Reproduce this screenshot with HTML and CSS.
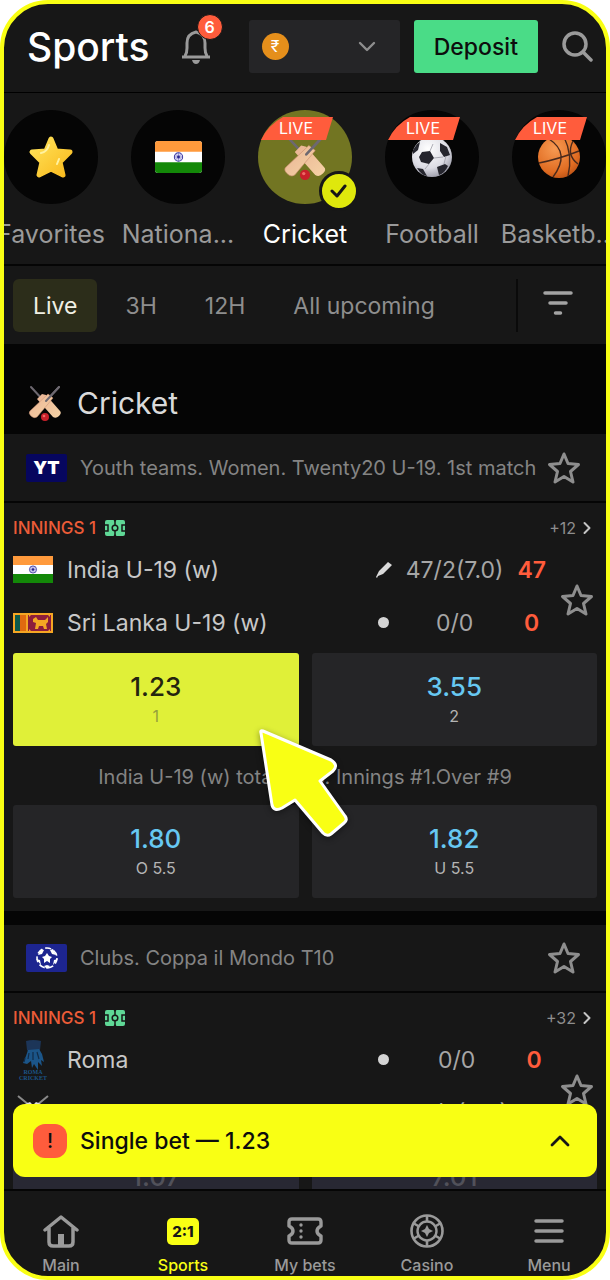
FILE: index.html
```html
<!DOCTYPE html>
<html lang="en">
<head>
  <meta charset="UTF-8" />
  <meta name="viewport" content="width=device-width, initial-scale=1.0"/>
  <title>Sports</title>
  <link rel="stylesheet" href="styles.css">
</head>
<body>
  <!-- Shared icons -->
  <svg class="sprite" aria-hidden="true">
    <defs>
      <linearGradient id="wood" x1="0" y1="0" x2="1" y2="1">
        <stop offset="0" stop-color="#e9b394"/>
        <stop offset="1" stop-color="#f6d3a6"/>
      </linearGradient>
      <linearGradient id="gold" x1="0" y1="0" x2="1" y2="1">
        <stop offset="0" stop-color="#ffe45c"/>
        <stop offset="1" stop-color="#f9b91c"/>
      </linearGradient>
      <radialGradient id="leather" cx=".4" cy=".3" r=".8">
        <stop offset="0" stop-color="#ffffff"/>
        <stop offset=".6" stop-color="#dcdce4"/>
        <stop offset="1" stop-color="#8c8c9a"/>
      </radialGradient>
      <radialGradient id="orange" cx=".4" cy=".3" r=".8">
        <stop offset="0" stop-color="#f79a52"/>
        <stop offset=".7" stop-color="#e06c22"/>
        <stop offset="1" stop-color="#b44c12"/>
      </radialGradient>
    </defs>
    <symbol id="star" viewBox="0 0 34 34">
      <path d="M17 3l4 9.500 10.500 1-8 7 2.500 10.500-9-5.500-9 5.500 2.500-10.500-8-7 10.500-1z" fill="none" stroke="#8e8e8e" stroke-width="3" stroke-linejoin="round"/>
    </symbol>
    <symbol id="bats" viewBox="0 0 34 36">
      <path d="M3 2l13 14M31 2L18 16" stroke="#6d6870" stroke-width="2" stroke-linecap="round"/>
      <path d="M14 9l-5 5 16 18q3 2 6-1t1-5L18 10z" fill="url(#wood)"/>
      <path d="M20 9l5 4L9 32q-3 2-6-1t-1-5z" fill="url(#wood)" stroke="#c98f70" stroke-width=".5"/>
      <path d="M31 2L18 16" stroke="#6d6870" stroke-width="2" stroke-linecap="round"/>
      <circle cx="17" cy="32" r="4" fill="#c8202a"/>
      <circle cx="16" cy="31" r="1.300" fill="#ee6a66"/>
    </symbol>
    <symbol id="india" viewBox="0 0 60 40" preserveAspectRatio="none">
      <path fill="#fff" d="M0 0h60v40H0z"/>
      <path fill="#ff9a3c" d="M0 0h60v13.500H0z"/>
      <path fill="#138808" d="M0 26.500h60V40H0z"/>
      <circle cx="30" cy="20" r="5.300" fill="#dcdcf5" stroke="#3a36a0" stroke-width="1.300"/>
      <path d="M30 15v10M25 20h10M26.500 16.500l7 7M33.500 16.500l-7 7" stroke="#6662b8" stroke-width=".7"/>
      <circle cx="30" cy="20" r="1.800" fill="#2a2690"/>
    </symbol>
    <symbol id="pitch" viewBox="0 0 20 16">
      <path fill="#5fd896" d="M2 0h6.500L10 2l1.500-2H18q2 0 2 2v12q0 2-2 2h-6.500L10 14l-1.500 2H2q-2 0-2-2V2q0-2 2-2z"/>
      <path fill="none" stroke="#171717" stroke-width="1.500" d="M10 0v5M10 11v5M0 5h3v6H0M20 5h-3v6h3"/>
      <circle cx="10" cy="8" r="2.800" fill="none" stroke="#171717" stroke-width="1.500"/>
    </symbol>
    <symbol id="next" viewBox="0 0 8 14">
      <path d="M1.500 2l5 5-5 5" fill="none" stroke="#c4c4c4" stroke-width="2" stroke-linecap="round" stroke-linejoin="round"/>
    </symbol>
  </svg>

  <div class="phone">
    <header class="topbar">
      <h1>Sports</h1>
      <button class="bell" aria-label="Notifications">
        <svg width="30" height="36" viewBox="0 0 30 36" fill="none" stroke="#9a9a9a" stroke-width="3">
          <path d="M1 28h28M4 27q2-3 2-8v-5q0-9 9-11 9 2 9 11v5q0 5 2 8" stroke-linejoin="round"/>
          <path d="M11 31h8q-1 4-4 4t-4-4z" fill="#9a9a9a" stroke="none"/>
        </svg>
        <span class="count">6</span>
      </button>
      <div class="wallet">
        <span class="coin">₹</span>
        <select aria-label="Wallet"><option></option></select>
        <svg class="arrow" width="18" height="12" viewBox="0 0 18 12"><path d="M2 2l7 7 7-7" fill="none" stroke="#8e8e8e" stroke-width="2.400" stroke-linecap="round" stroke-linejoin="round"/></svg>
      </div>
      <button class="deposit">Deposit</button>
      <button class="search" aria-label="Search">
        <svg width="31" height="32" viewBox="0 0 31 32" fill="none" stroke="#9a9a9a" stroke-width="3.500" stroke-linecap="round"><circle cx="13" cy="13" r="11"/><path d="M21 21l8 8"/></svg>
      </button>
    </header>

    <nav class="sports">
      <a class="sport" href="#favorites">
        <span class="circle">
          <svg width="48" height="48" viewBox="0 0 48 48"><path d="M24 6l5 12 14 1-10 10 3 13-12-6-12 6 3-13L5 19l14-1z" fill="url(#gold)" stroke="url(#gold)" stroke-width="5" stroke-linejoin="round"/><path d="M22 12q-2 7-8 8M32 26l-2 5" fill="none" stroke="#fff2a0" stroke-width="2" stroke-linecap="round"/></svg>
        </span>
        <span class="label">Favorites</span>
      </a>
      <a class="sport" href="#national">
        <span class="circle"><svg class="flag" width="47" height="32"><use href="#india"/></svg></span>
        <span class="label">Nationa...</span>
      </a>
      <a class="sport active" href="#cricket">
        <span class="circle">
          <svg width="44" height="46"><use href="#bats"/></svg>
          <span class="live">LIVE</span>
          <span class="tick"><svg width="18" height="16" viewBox="0 0 18 16"><path d="M2 8l5 5 8-10" fill="none" stroke="#171717" stroke-width="3" stroke-linecap="round" stroke-linejoin="round"/></svg></span>
        </span>
        <span class="label">Cricket</span>
      </a>
      <a class="sport" href="#football">
        <span class="circle">
          <svg width="42" height="42" viewBox="0 0 42 42">
            <circle cx="21" cy="21" r="20" fill="url(#leather)"/>
            <path fill="#25252d" d="M11 16l8-1 4 7-5 6-8-2-2-5zM29 7l7 4 3 8-6 2-4-6zM26 31l8-3 3 2q-3 7-9 9zM6 32l6 1 4 7q-6-1-10-8zM2 14l4-6 3-2-2 8-5 4z"/>
            <path d="M19 15l3-7M23 22l9-1M18 28l-4 5M33 28l2-8" stroke="#9a9aa4" stroke-width=".8"/>
          </svg>
          <span class="live">LIVE</span>
        </span>
        <span class="label">Football</span>
      </a>
      <a class="sport" href="#basketball">
        <span class="circle">
          <svg width="44" height="44" viewBox="0 0 44 44">
            <circle cx="22" cy="22" r="21" fill="url(#orange)"/>
            <path d="M2 28q20-4 40-12M12 4q22 14 4 38M27 2q9 18 4 39M36 6q-7 14 5 23" fill="none" stroke="#4a2a1c" stroke-width="1.400"/>
          </svg>
          <span class="live">LIVE</span>
        </span>
        <span class="label">Basketb...</span>
      </a>
    </nav>

    <div class="filters">
      <button class="chip selected">Live</button>
      <button class="chip">3H</button>
      <button class="chip">12H</button>
      <button class="chip">All upcoming</button>
      <button class="filter-btn" aria-label="Filters">
        <svg width="30" height="24" viewBox="0 0 30 24" stroke="#a3a3a3" stroke-width="3.500" stroke-linecap="round"><path d="M2 2h26M7 12h16M12.500 22h5"/></svg>
      </button>
    </div>

    <main>
      <div class="events">
        <h2><svg width="34" height="36"><use href="#bats"/></svg>Cricket</h2>

        <section class="league">
          <span class="badge youth">YT</span>
          <h3>Youth teams. Women. Twenty20 U-19. 1st match</h3>
          <button class="fav" aria-label="Favorite league"><svg width="34" height="34"><use href="#star"/></svg></button>
        </section>
        <article class="match">
          <div class="info">
            <span class="stage">INNINGS 1</span>
            <svg width="20" height="16"><use href="#pitch"/></svg>
            <a class="more" href="#more">+12 <svg width="8" height="14"><use href="#next"/></svg></a>
          </div>
          <div class="teams">
            <svg class="logo" width="40" height="27"><use href="#india"/></svg>
            <span class="name">India U-19 (w)</span>
            <svg class="mark" width="16" height="16" viewBox="0 0 16 16"><path d="M0 15l3-6 9-9 4 3-9 9-5 2-1 2z" fill="#dadada"/></svg>
            <span class="score">47/2(7.0)</span>
            <b class="total">47</b>
            <svg class="logo" width="40" height="20" viewBox="0 0 40 20">
              <path fill="#f5a623" d="M0 0h40v20H0z"/>
              <path fill="#0b5a4c" d="M2 2h5v16H2z"/>
              <path fill="#e06a10" d="M7 2h6v16H7z"/>
              <path fill="#8d1d3c" d="M15 2h23v16H15z"/>
              <path fill="#f5a623" d="M20 6l3-2 2 3h7l3-3v5l-2 2 1 5h-3l-1-3h-4l-1 3h-3l1-6-3-1zM16 2h2l-2 2zM37 2v2l-2-2zM16 18v-2l2 2zM37 18h-2l2-2z"/>
            </svg>
            <span class="name">Sri Lanka U-19 (w)</span>
            <span class="mark dot"></span>
            <span class="score">0/0</span>
            <b class="total">0</b>
            <button class="fav" aria-label="Favorite match"><svg width="34" height="34"><use href="#star"/></svg></button>
          </div>
          <div class="odds">
            <div class="picked">
              <button class="odd on"><b>1.23</b><small>1</small></button>
              <svg class="pointer" width="100" height="120" viewBox="0 0 100 120"><path d="M9 9l68 29q8 5 2 11l-13 10 25 35q3 4-1 7l-13 11q-4 3-8-1L41 78l-13 8q-8 4-10-3L7 11q-1-3 2-2z" fill="#f9ff14" stroke="#fff" stroke-width="3" stroke-linejoin="round"/></svg>
            </div>
            <button class="odd"><b>3.55</b><small>2</small></button>
          </div>
          <p class="market">India U-19 (w) total runs. Innings #1.Over #9</p>
          <div class="odds">
            <button class="odd"><b>1.80</b><small>O 5.5</small></button>
            <button class="odd"><b>1.82</b><small>U 5.5</small></button>
          </div>
        </article>

        <section class="league second">
          <span class="badge clubs">
            <svg width="24" height="24" viewBox="0 0 24 24">
              <circle cx="12" cy="12" r="10" fill="none" stroke="#fff" stroke-width="1.600" stroke-dasharray="6 3"/>
              <path fill="#fff" d="M12 7l2 3 3 1-2 2v4l-3-2-3 2V13l-2-2 3-1zM6 3l3 1-2 4-4 1zM18 3l-3 1 2 4 4 1zM1 13l4 1 1 5zM23 13l-4 1-1 5zM9 20l3-1 3 1-3 3z"/>
            </svg>
          </span>
          <h3>Clubs. Coppa il Mondo T10</h3>
          <button class="fav" aria-label="Favorite league"><svg width="34" height="34"><use href="#star"/></svg></button>
        </section>
        <article class="match">
          <div class="info">
            <span class="stage">INNINGS 1</span>
            <svg width="20" height="16"><use href="#pitch"/></svg>
            <a class="more" href="#more">+32 <svg width="8" height="14"><use href="#next"/></svg></a>
          </div>
          <div class="teams">
            <svg class="logo" width="40" height="42" viewBox="0 0 40 42">
              <path fill="#1c3558" d="M13 2q7-2 15 0l-1 9-5 3h-5l-3-3z"/>
              <path fill="#1b5588" d="M15 11l11-1 3 5 2 8-3-2 1 6-4-4v8l-4-6-2 4-1-7-4 3-4-1 3-7z"/>
              <path d="M16 14l-1 6M20 13v8M24 13l2 7M12 19l-1 4" stroke="#122c48" stroke-width="1.200"/>
              <text x="20" y="35" class="crest">ROMA</text>
              <text x="20" y="41" class="crest">CRICKET</text>
            </svg>
            <span class="name">Roma</span>
            <span class="mark dot"></span>
            <span class="score">0/0</span>
            <b class="total">0</b>
            <svg class="logo" width="40" height="36" viewBox="0 0 40 36"><path d="M5 1l11 9 18 18M35 1L24 10 6 28" fill="none" stroke="#8a8a8a" stroke-width="2"/><path d="M12 9l5-2 3 3 3-3 5 2-8 8z" fill="#dedede"/></svg>
            <span class="name"></span>
            <span class="mark"></span>
            <span class="score">40/2(4.3)</span>
            <b class="total"></b>
            <button class="fav" aria-label="Favorite match"><svg width="34" height="34"><use href="#star"/></svg></button>
          </div>
          <div class="odds faded">
            <button class="odd"><b>1.07</b><small>1</small></button>
            <button class="odd"><b>7.01</b><small>2</small></button>
          </div>
        </article>
      </div>

      <button class="betslip">
        <span class="alert">!</span>
        Single bet — 1.23
        <svg class="up" width="20" height="13" viewBox="0 0 20 13"><path d="M2 11l8-8 8 8" fill="none" stroke="#171717" stroke-width="2.800" stroke-linecap="round" stroke-linejoin="round"/></svg>
      </button>
    </main>

    <nav class="tabs">
      <a href="#main">
        <svg width="36" height="34" viewBox="0 0 36 34" fill="none" stroke="#9a9a9a" stroke-width="3.500" stroke-linecap="round" stroke-linejoin="round"><path d="M2 16L18 3l16 13M6 14v14q0 4 4 4h16q4 0 4-4V14"/><path d="M15 20h6v11h-6z" fill="#9a9a9a" stroke="none"/></svg>
        Main
      </a>
      <a class="current" href="#sports"><span class="ratio">2:1</span>Sports</a>
      <a href="#bets">
        <svg width="36" height="28" viewBox="0 0 36 28" fill="none" stroke="#9a9a9a" stroke-width="3.400" stroke-linejoin="round"><path d="M5 2h26q3 0 3 3v4q-4 2-4 5t4 5v4q0 3-3 3H5q-3 0-3-3v-4q4-2 4-5T2 9V5q0-3 3-3z"/><path d="M14 8v.1M14 14v.1M14 20v.1" stroke-linecap="round"/></svg>
        My bets
      </a>
      <a href="#casino">
        <svg width="34" height="34" viewBox="0 0 34 34" fill="none" stroke="#9a9a9a"><circle cx="17" cy="17" r="15.500" stroke-width="2.600"/><circle cx="17" cy="17" r="9.500" stroke-width="2.400"/><path d="M17 2v6M17 26v6M4 9.500l5 3M25 21.500l5 3M4 24.500l5-3M25 12.500l5-3" stroke-width="2.600"/><path d="M17 11l2 4 4 2-4 2-2 4-2-4-4-2 4-2z" fill="#9a9a9a" stroke="none"/></svg>
        Casino
      </a>
      <a href="#menu">
        <svg width="30" height="24" viewBox="0 0 30 24" stroke="#9a9a9a" stroke-width="3.500" stroke-linecap="round"><path d="M2 2h26M2 12h26M2 22h26"/></svg>
        Menu
      </a>
    </nav>
  </div>
</body>
</html>
```
FILE: styles.css
```css
* {
  box-sizing: border-box;
}

body {
  margin: 0;
  background: #fff;
  font-family: Inter, sans-serif;
  color: #c8c8c8;
}

h1, h2, h3, p {
  margin: 0;
  font-weight: 400;
}

button {
  border: none;
  padding: 0;
  background: none;
  color: inherit;
  font-family: inherit;
  cursor: pointer;
}

a {
  color: inherit;
  text-decoration: none;
}

svg {
  display: block;
  flex-shrink: 0;
}

.sprite {
  position: absolute;
  width: 0;
  height: 0;
}

.phone {
  display: flex;
  flex-direction: column;
  height: 100vh;
  border: 4px solid #f9ff14;
  border-radius: 48px;
  background: #171717;
  overflow: hidden;
}

/* Top bar */
.topbar {
  display: flex;
  align-items: center;
  padding: 16px 13px 19px 23px;
  border-bottom: 1px solid #000;
}

.topbar h1 {
  color: #fff;
  font-size: 39px;
  line-height: 53px;
  font-weight: 500;
}

.bell {
  position: relative;
  margin-left: 31px;
}

.count {
  position: absolute;
  top: -15px;
  right: -12px;
  width: 26px;
  height: 26px;
  border: 1px solid #171717;
  border-radius: 50%;
  background: #ff5c3c;
  color: #fff;
  font-size: 16px;
  line-height: 24px;
  font-weight: 600;
}

.wallet {
  display: flex;
  flex: 1;
  align-items: center;
  height: 53px;
  margin: 0 14px 0 38px;
  padding: 0 24px 0 13px;
  border-radius: 3px;
  background: #252527;
}

.coin {
  width: 27px;
  height: 27px;
  border-radius: 50%;
  background: #e58f1b;
  color: #fff;
  font-size: 16px;
  line-height: 27px;
  text-align: center;
}

.wallet select {
  flex: 1;
  min-width: 0;
  height: 53px;
  border: none;
  background: none;
  appearance: none;
}

.deposit {
  height: 53px;
  padding: 0 20px;
  border-radius: 3px;
  background: #4adc87;
  color: #0d0d0d;
  font-size: 23px;
  font-weight: 500;
}

.search {
  margin-left: 24px;
}

/* Sports strip */
.sports {
  display: flex;
  justify-content: center;
  padding: 17px 0 13px;
  border-bottom: 2px solid #050505;
  overflow: hidden;
}

.sport {
  flex: 0 0 127px;
  display: flex;
  flex-direction: column;
  align-items: center;
  gap: 13px;
  color: #9a9a9a;
}

.circle {
  position: relative;
  display: flex;
  align-items: center;
  justify-content: center;
  width: 94px;
  height: 94px;
  border-radius: 50%;
  background: #050505;
}

.flag {
  border-radius: 3px;
}

.active {
  color: #fff;
}

.active .circle {
  background: #727522;
}

.label {
  font-size: 25px;
  line-height: 34px;
  white-space: nowrap;
}

.live {
  position: absolute;
  top: 7px;
  left: 3px;
  width: 72px;
  padding-right: 2px;
  background: #ff5c3c;
  color: #fff;
  font-size: 16px;
  line-height: 23px;
  text-align: center;
  clip-path: path("M22 0 H72 L65 23 H0 Q7 8 22 0 Z");
}

.tick {
  position: absolute;
  right: -7px;
  bottom: -7px;
  display: flex;
  align-items: center;
  justify-content: center;
  width: 40px;
  height: 40px;
  border: 3px solid #171717;
  border-radius: 50%;
  background: #dfe80c;
}

/* Time filters */
.filters {
  display: flex;
  gap: 8px;
  padding: 13px 9px 12px;
}

.chip {
  height: 53px;
  padding: 0 20px;
  border-radius: 6px;
  color: #8e8e8e;
  font-size: 23px;
}

.selected {
  background: #2c2d1a;
  color: #f0f0e4;
}

.filter-btn {
  margin-left: auto;
  padding: 0 24px 6px 25px;
  border-left: 2px solid #0a0a0a;
}

/* Events */
main {
  position: relative;
  flex: 1;
  min-height: 0;
}

.events {
  height: 100%;
  overflow: hidden;
}

h2 {
  display: flex;
  align-items: center;
  gap: 15px;
  height: 90px;
  padding: 28px 24px 0;
  background: #050505;
  color: #dadada;
  font-size: 30px;
}

.league {
  display: flex;
  align-items: center;
  gap: 13px;
  height: 69px;
  padding: 0 25px 0 22px;
  border-bottom: 2px solid #050505;
}

.second {
  height: 82px;
  border-top: 14px solid #050505;
}

.league h3 {
  flex: 1;
  min-width: 0;
  color: #848484;
  font-size: 20px;
  white-space: nowrap;
}

.badge {
  display: flex;
  flex-shrink: 0;
  align-items: center;
  justify-content: center;
  width: 41px;
  height: 28px;
  border-radius: 2px;
  color: #fff;
}

.youth {
  background: #06065e;
  font-size: 18px;
  font-weight: 900;
}

.clubs {
  background: #1d2590;
}

.match {
  padding: 9px 9px 13px;
}

.info {
  display: flex;
  align-items: center;
  gap: 9px;
  height: 31px;
  font-size: 16px;
}

.stage {
  color: #ec5c38;
  font-size: 17px;
  font-weight: 500;
}

.more {
  display: flex;
  align-items: center;
  gap: 7px;
  margin-left: auto;
  padding-right: 6px;
  color: #8e8e8e;
}

.teams {
  display: grid;
  grid-template-columns: 40px 1fr 16px auto minmax(24px, auto) 34px;
  grid-template-rows: 53px 53px;
  column-gap: 14px;
  align-items: center;
  padding: 0 3px 4px 0;
  font-size: 23px;
}

.name {
  overflow: hidden;
  white-space: nowrap;
}

.dot {
  justify-self: center;
  width: 11px;
  height: 11px;
  border-radius: 50%;
  background: #d4d4d4;
}

.score, .total {
  text-align: center;
}

.score {
  color: #a6a6a6;
}

.total {
  color: #ff5c3c;
  font-weight: 600;
}

.teams .fav {
  grid-column: 6;
  grid-row: 1 / 3;
  padding-top: 8px;
}

.crest {
  fill: #1b5588;
  font-family: "Liberation Serif", serif;
  font-size: 6px;
  font-weight: 700;
  text-anchor: middle;
}

.odds {
  display: grid;
  grid-template-columns: 1fr 1fr;
  gap: 13px;
}

.picked {
  position: relative;
}

.odd {
  display: flex;
  flex-direction: column;
  align-items: center;
  justify-content: center;
  width: 100%;
  height: 93px;
  border-radius: 3px;
  background: #252527;
}

.odd b {
  color: #67c8f2;
  font-size: 26px;
  line-height: 32px;
  font-weight: 500;
}

.odd small {
  color: #b4b4b4;
  font-size: 16px;
  line-height: 26px;
}

.on {
  background: #e0f038;
}

.on b {
  color: #24240f;
}

.on small {
  color: #95a03c;
}

.faded .odd {
  background: #282833;
}

.faded b {
  color: #51515a;
}

.pointer {
  position: absolute;
  top: 69px;
  right: -55px;
  z-index: 2;
  filter: drop-shadow(0 2px 3px rgba(0, 0, 0, 0.4));
}

.market {
  padding-top: 4px;
  color: #848484;
  font-size: 20px;
  line-height: 55px;
  text-align: center;
}

/* Bet slip bar */
.betslip {
  position: absolute;
  right: 9px;
  bottom: 12px;
  left: 9px;
  z-index: 3;
  display: flex;
  align-items: center;
  gap: 13px;
  height: 73px;
  padding: 0 27px 0 20px;
  border-radius: 12px;
  background: #f9ff14;
  color: #0d0d0d;
  font-size: 23px;
  font-weight: 500;
}

.alert {
  width: 34px;
  height: 34px;
  border-radius: 12px;
  background: #ff5c3c;
  font-size: 20px;
  line-height: 34px;
}

.up {
  margin-left: auto;
}

/* Bottom tabs */
.tabs {
  display: flex;
  height: 87px;
  margin: 0 -4px;
  border-top: 2px solid #050505;
}

.tabs a {
  flex: 1;
  display: grid;
  grid-template-rows: 34px 22px;
  align-content: start;
  align-items: center;
  justify-items: center;
  row-gap: 6px;
  padding-top: 23px;
  color: #9a9a9a;
  font-size: 16px;
  line-height: 22px;
  font-weight: 500;
}

.tabs .current {
  color: #f9ff14;
}

.ratio {
  padding: 0 5px;
  border-radius: 5px;
  background: #f9ff14;
  color: #171717;
  font-size: 15px;
  line-height: 27px;
  font-weight: 800;
}
```
